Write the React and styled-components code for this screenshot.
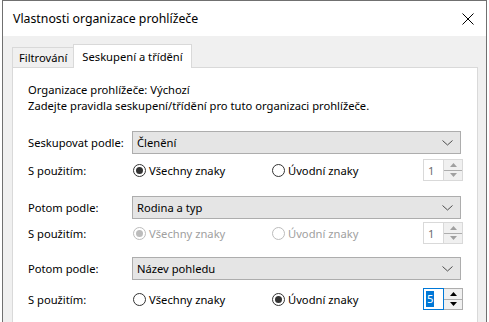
import React from "react";
import styled, { createGlobalStyle } from "styled-components";

const Global = createGlobalStyle`
  html, body { margin: 0; padding: 0; background: #ffffff; overflow: hidden; }
  body { font-family: "Noto Sans", "Liberation Sans", sans-serif; font-size: 11.2px; color: #000; }
`;

const Window = styled.div`
  margin-left: 2px;
  width: 483px;
  height: 322px;
  border: 1px solid #707070;
  border-bottom: none;
  background: #f0f0f0;
  display: flex;
  flex-direction: column;
`;

const TitleBar = styled.div`
  height: 35px;
  background: #ffffff;
  display: flex;
  align-items: center;
  justify-content: space-between;
  padding: 0 12px 0 10px;
  flex-shrink: 0;
  font-size: 12.3px;
`;

const Body = styled.div`
  padding: 8px 8px 0 9px;
  flex: 1;
  display: flex;
  flex-direction: column;
`;

const TabRow = styled.div`
  display: flex;
  align-items: flex-end;
  margin-bottom: -1px;
  position: relative;
  z-index: 1;
`;

const Tab = styled.div`
  display: flex;
  align-items: center;
  padding: 0 ${(p) => (p.$active ? "8px" : "6px")};
  height: ${(p) => (p.$active ? "23px" : "19px")};
  margin-bottom: ${(p) => (p.$active ? "0" : "1px")};
  background: ${(p) => (p.$active ? "#ffffff" : "#f0f0f0")};
  border: 1px solid #d9d9d9;
  border-bottom: none;
  border-right: ${(p) => (p.$active ? "1px solid #d9d9d9" : "none")};
`;

const Panel = styled.div`
  flex: 1;
  background: #ffffff;
  border: 1px solid #d9d9d9;
  padding: 14px 14px 0 15px;
`;

const Line = styled.div`
  line-height: 16px;
  height: 16px;
  white-space: nowrap;
`;

const Intro = styled.div`
  margin-bottom: 17px;
`;

const Row = styled.div`
  display: flex;
  align-items: center;
  height: ${(p) => p.$h || 22}px;
  margin-top: ${(p) => p.$mt || 0}px;
`;

const Label = styled.div`
  width: 104px;
  flex-shrink: 0;
  white-space: nowrap;
`;

const Select = styled.div`
  width: 316px;
  height: 21px;
  background: #e5e5e5;
  border: 1px solid #adadad;
  display: flex;
  align-items: center;
  justify-content: space-between;
  padding: 0 7px 0 4px;
`;

const Options = styled.div`
  display: flex;
  align-items: center;
  width: 331px;
`;

const RadioLabel = styled.label`
  display: flex;
  align-items: center;
  width: ${(p) => p.$w}px;
  color: ${(p) => (p.$disabled ? "#a0a0a0" : "#000")};
  white-space: nowrap;
`;

const Circle = styled.span`
  width: 11px;
  height: 11px;
  border-radius: 50%;
  border: 1px solid ${(p) => (p.$disabled ? "#bcbcbc" : "#333333")};
  margin: 0 3px 0 1px;
  display: flex;
  align-items: center;
  justify-content: center;
  background: #fff;
  &::after {
    content: "";
    width: 7px;
    height: 7px;
    border-radius: 50%;
    background: ${(p) => (p.$disabled ? "#bcbcbc" : "#333333")};
    display: ${(p) => (p.$checked ? "block" : "none")};
  }
`;

const Spin = styled.div`
  margin-left: auto;
  display: flex;
  height: 22px;
  width: 40px;
`;

const SpinField = styled.div`
  flex: 1;
  border: 1px solid ${(p) => (p.$focus ? "#0078d7" : "#d9d9d9")};
  border-right: ${(p) => (p.$focus ? "1px solid #0078d7" : "none")};
  display: flex;
  align-items: center;
  padding-left: 4px;
  color: ${(p) => (p.$focus ? "#000" : "#6d6d6d")};
`;

const Selected = styled.span`
  background: #0078d7;
  color: #fff;
  line-height: 16px;
  padding: 0 1px;
  margin-left: -2px;
`;

const SpinButtons = styled.div`
  width: 18px;
  display: flex;
  flex-direction: column;
  border: 1px solid ${(p) => (p.$focus ? "#adadad" : "#d9d9d9")};
  border-left: ${(p) => (p.$focus ? "none" : "1px solid #d9d9d9")};
  background: #f0f0f0;
`;

const SpinBtn = styled.div`
  flex: 1;
  display: flex;
  align-items: center;
  justify-content: center;
  & + & {
    border-top: 1px solid ${(p) => (p.$focus ? "#adadad" : "#d9d9d9")};
  }
`;

const Chevron = () => (
  <svg width="11" height="6" viewBox="0 0 11 6">
    <path d="M0.5 0.5 L5.5 5 L10.5 0.5" fill="none" stroke="#4d4d4d" strokeWidth="1" />
  </svg>
);

const Arrow = ({ up, color }) => (
  <svg width="7" height="4" viewBox="0 0 7 4">
    <path d={up ? "M0 4 L3.5 0 L7 4 Z" : "M0 0 L3.5 4 L7 0 Z"} fill={color} />
  </svg>
);

const CloseIcon = () => (
  <svg width="12" height="12" viewBox="0 0 12 12">
    <path d="M0.5 0.5 L11.5 11.5 M11.5 0.5 L0.5 11.5" stroke="#000" strokeWidth="1" />
  </svg>
);

const Spinner = ({ value, focus }) => {
  const c = focus ? "#000" : "#a0a0a0";
  return (
    <Spin>
      <SpinField $focus={focus}>{focus ? <Selected>{value}</Selected> : value}</SpinField>
      <SpinButtons $focus={focus}>
        <SpinBtn $focus={focus}><Arrow up color={c} /></SpinBtn>
        <SpinBtn $focus={focus}><Arrow color={c} /></SpinBtn>
      </SpinButtons>
    </Spin>
  );
};

const Radio = ({ checked, disabled, children, w }) => (
  <RadioLabel $disabled={disabled} $w={w}>
    <Circle $checked={checked} $disabled={disabled} />
    {children}
  </RadioLabel>
);

const groups = [
  { label: "Seskupovat podle:", value: "Členění", first: true, disabled: false, value2: 1, selMt: 0, rowMt: 5 },
  { label: "Potom podle:", value: "Rodina a typ", first: true, disabled: true, value2: 1, selMt: 15, rowMt: 3 },
  { label: "Potom podle:", value: "Název pohledu", first: false, disabled: false, value2: 5, selMt: 13, rowMt: 8 },
];

export default function App() {
  return (
    <>
      <Global />
      <Window>
        <TitleBar>
          <span>Vlastnosti organizace prohlížeče</span>
          <CloseIcon />
        </TitleBar>
        <Body>
          <TabRow>
            <Tab>Filtrování</Tab>
            <Tab $active>Seskupení a třídění</Tab>
          </TabRow>
          <Panel>
            <Intro>
              <Line>Organizace prohlížeče: Výchozí</Line>
              <Line>Zadejte pravidla seskupení/třídění pro tuto organizaci prohlížeče.</Line>
            </Intro>
            {groups.map((g, i) => (
              <React.Fragment key={i}>
                <Row $h={23} $mt={g.selMt}>
                  <Label>{g.label}</Label>
                  <Select>
                    <span>{g.value}</span>
                    <Chevron />
                  </Select>
                </Row>
                <Row $mt={g.rowMt}>
                  <Label>S použitím:</Label>
                  <Options>
                    <Radio w={139} checked={g.first} disabled={g.disabled}>Všechny znaky</Radio>
                    <Radio w={120} checked={!g.first} disabled={g.disabled}>Úvodní znaky</Radio>
                    <Spinner value={g.value2} focus={!g.first} />
                  </Options>
                </Row>
              </React.Fragment>
            ))}
          </Panel>
        </Body>
      </Window>
    </>
  );
}
